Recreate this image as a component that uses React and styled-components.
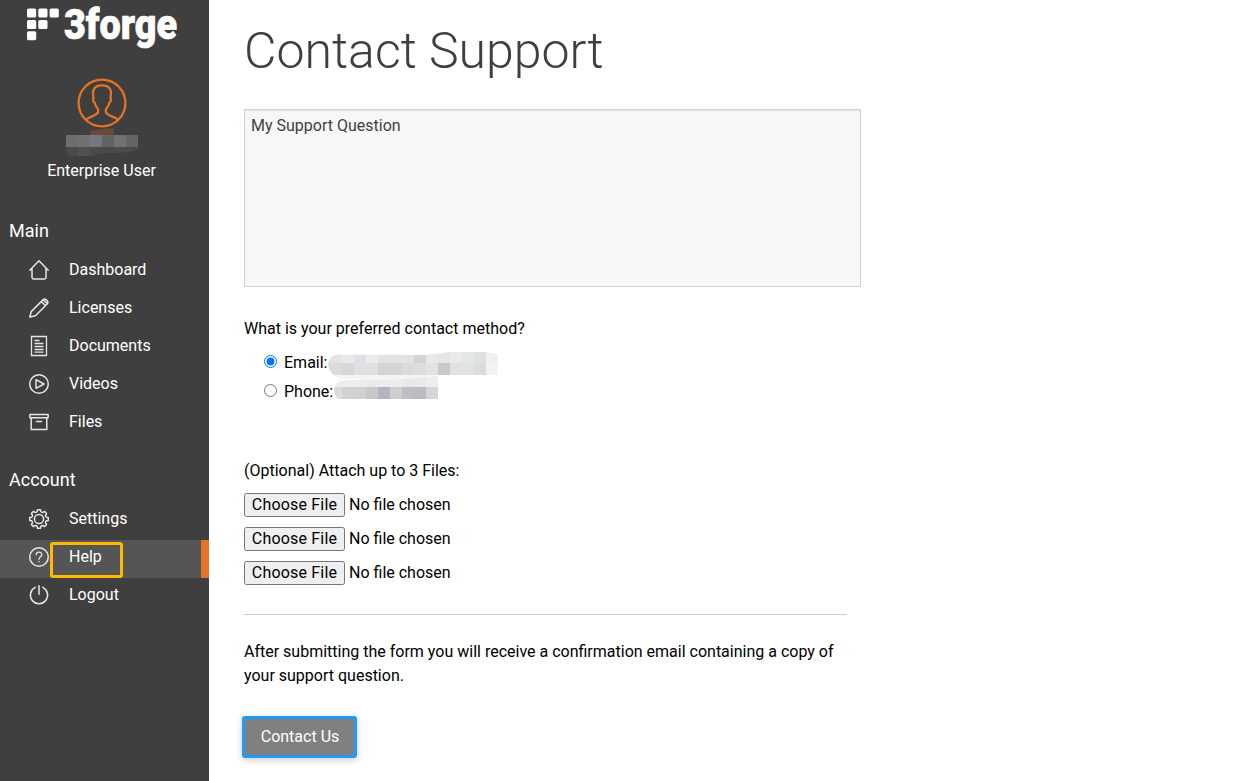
import React from "react";
import styled, { createGlobalStyle } from "styled-components";

const GlobalStyle = createGlobalStyle`
  *, *::before, *::after { box-sizing: border-box; }
  html, body { margin: 0; padding: 0; background: #fff; }
  body { font-family: Roboto, "Liberation Sans", sans-serif; font-size: 16px; line-height: 24px; color: #000; overflow: hidden; }
`;

const Page = styled.div`
  display: flex;
  height: 781px;
  overflow: hidden;
`;

const Sidebar = styled.aside`
  flex: 0 0 209px;
  background: #3f3f3f;
  color: #fff;
`;

const Logo = styled.svg`
  display: block;
  margin-left: 26px;
  overflow: visible;
`;

const LogoText = styled.text`
  font-family: Roboto, "Liberation Sans", sans-serif;
  font-weight: 900;
  font-size: 42px;
  fill: #fff;
  stroke: #fff;
  stroke-width: 0.7px;
  stroke-linejoin: round;
`;

const Profile = styled.div`
  display: flex;
  flex-direction: column;
  align-items: center;
  width: 203px;
  padding-top: 24px;
`;

const Role = styled.div`
  margin-top: 3px;
`;

const GroupTitle = styled.h2`
  margin: ${(p) => p.$top}px 0 10px 9px;
  font-size: 18px;
  line-height: 24px;
  font-weight: 400;
`;

const NavItem = styled.a`
  display: flex;
  height: 38px;
  padding: 0 0 0 28px;
  background: ${(p) => (p.$active ? "#555" : "transparent")};
  border-right: ${(p) => (p.$active ? "8px solid #e57225" : "0")};
  svg { margin-top: 6px; }
`;

const NavLabel = styled.span`
  position: relative;
  margin: 5px 0 0 19px;
`;

const Highlight = styled.span`
  position: absolute;
  left: -19px;
  top: -3px;
  width: 73px;
  height: 36px;
  border: 3px solid #ffb900;
  border-radius: 3px;
`;

const Main = styled.main`
  display: flex;
  flex-direction: column;
  align-items: flex-start;
  padding-left: 35px;
`;

const Title = styled.h1`
  margin: 21px 0 0;
  font-size: 50px;
  line-height: 60px;
  font-weight: 300;
  color: #3f3f3f;
`;

const Question = styled.textarea`
  display: block;
  width: 617px;
  height: 178px;
  margin: 28px 0 0;
  padding: 4px 6px;
  font: inherit;
  color: #3f3f3f;
  background: #f7f7f7;
  border: 1px solid #d2d2d2;
  border-radius: 0;
  box-shadow: inset 0 1px 1px #e2e2e2;
  resize: none;
  outline: none;
`;

const Prompt = styled.p`
  margin: ${(p) => p.$top}px 0 ${(p) => p.$bottom}px;
`;

const Option = styled.label`
  display: flex;
  height: 29px;
  padding-left: 20px;
  white-space: nowrap;
`;

const Radio = styled.input`
  width: 13px;
  height: 13px;
  margin: 4px 7px 0 0;
`;

const Redacted = styled.svg`
  flex: none;
  margin: ${(p) => p.$top}px 0 0 ${(p) => p.$left}px;
`;

const FileInput = styled.input`
  display: block;
  width: 300px;
  height: 24px;
  margin: 0 0 10px;
  font: inherit;
  line-height: 20px;
  &::file-selector-button {
    box-sizing: border-box;
    width: 101px;
    height: 24px;
    padding: 0 0 1px;
    font: inherit;
    line-height: 19px;
    letter-spacing: 0.18px;
  }
`;

const Divider = styled.div`
  width: 603px;
  height: 1px;
  margin-top: 19px;
  background: #ccc;
`;

const Note = styled.p`
  width: 603px;
  margin: 25px 0 28px;
`;

const Submit = styled.button`
  width: 115px;
  height: 42px;
  margin-left: -2px;
  padding: 0 0 1px 1px;
  font: inherit;
  color: #fff;
  background: #808080;
  border: 3px solid #1e9bff;
  border-radius: 3px;
  box-shadow: 0 2px 7px rgba(0, 0, 0, 0.2);
`;

const Glyph = ({ children }) => (
  <svg width="22" height="22" viewBox="0 0 22 22" fill="none" stroke="#e6e6e6" strokeWidth="1.5" strokeLinecap="round" strokeLinejoin="round">
    {children}
  </svg>
);

const gearPoints = () => {
  let d = "";
  for (let i = 0; i < 8; i++) {
    const at = (r, deg) => {
      const a = ((i * 45 + deg) * Math.PI) / 180;
      return `${(11 + r * Math.sin(a)).toFixed(2)} ${(11 - r * Math.cos(a)).toFixed(2)}`;
    };
    d += `${i ? "L" : "M"}${at(9.4, -9)} L${at(9.4, 9)} L${at(7.6, 14)} Q${at(6.9, 22.5)} ${at(7.6, 31)} `;
  }
  return d + "Z";
};

const icons = {
  home: <path d="M1.8 11.2 11 1.8 20.2 11.2M4 9.5V18.6Q4 20 5.4 20H16.6Q18 20 18 18.6V9.5" />,
  pencil: <path d="M1.8 20 3.2 14.6 15.2 2.6Q16.5 1.3 18 2.6L19.4 4Q20.7 5.5 19.4 6.8L7.4 18.8ZM13.3 4.5 17.5 8.7M15.2 2.8 19.2 6.8" />,
  doc: <path d="M3.5 1.5H18.5V20.5H3.5ZM6.5 5.500H11.500M6.500 8.500H15.500M6.500 11.500H15.500M6.500 14.500H15.500M6.500 17.200H15.500" strokeWidth="1.3" strokeLinecap="butt" strokeLinejoin="miter" />,
  play: <><circle cx="11" cy="11" r="9.3" /><path d="M8 6.7V15.3L16 11Z" /></>,
  box: <path d="M1.9 3.500H20.100V6.800H1.900ZM3.200 6.800V18.400H18.800V6.800M8.500 10.500H13.500" />,
  gear: <><path d={gearPoints()} /><circle cx="11" cy="11" r="4.6" /></>,
  help: <><circle cx="11" cy="11" r="9.3" /><path d="M8.2 8.7C8.2 5.2 13.8 5.2 13.8 8.5C13.8 10.8 11 10.6 11 13.3M11 15.4V15.8" strokeWidth="1.3" /></>,
  power: <path d="M11 1.7V10.3M7.2 3.400A8.600 8.600 0 1 0 14.800 3.400" />,
};

const Item = ({ icon, active, marked, children }) => (
  <NavItem $active={active}>
    <Glyph>{icons[icon]}</Glyph>
    <NavLabel>{children}{marked && <Highlight />}</NavLabel>
  </NavItem>
);

const Cells = ({ colors, x, y, h, first = 12, size = 12 }) =>
  colors.map((c, i) => (
    <rect key={i} x={i ? x + first + (i - 1) * size : x} y={y} width={i ? size : first} height={h} fill={c} shapeRendering="crispEdges" />
  ));

export default function App() {
  return (
    <>
      <GlobalStyle />
      <Page>
        <Sidebar>
          <Logo width="155" height="54" viewBox="26 0 155 54">
            {[[27, 8.5], [38.3, 8.5], [49.6, 8.5], [27, 20], [38.3, 20], [27, 31.2]].map(([x, y]) => (
              <rect key={`${x}-${y}`} x={x} y={y} width="9.2" height="9" rx="1.6" fill="#fff" />
            ))}
            <LogoText x="64" y="39.3" textLength="113" lengthAdjust="spacingAndGlyphs">3forge</LogoText>
          </Logo>
          <Profile>
            <svg width="74" height="78" viewBox="65 78 74 78">
              <g fill="none" stroke="#e57225" strokeWidth="2.3" strokeLinejoin="round">
                <circle cx="102" cy="103" r="23.4" />
                <path d="M86 119.500C91 115.500 98.500 116 98.300 110.500C98.200 107.500 95.500 107.500 94.800 102.800C93 102 92.600 99.500 93.600 98.200C91.500 89 95 85.300 102 85.300C109 85.300 112.500 89 110.400 98.200C111.400 99.500 111 102 109.200 102.800C108.500 107.500 105.800 107.500 105.700 110.500C105.500 116 113 115.500 118 119.500" />
              </g>
              <path d="M90 131 102 129 114 128V135H90Z" fill="#664a37" />
              <Cells x={66} y={135} h={12} colors={["#6e6e6e", "#717171", "#77767c", "#636363", "#727273", "#656463"]} />
              <path d="M66 147H138V149Q132 153 114 153Q98 153 92 156H68Q66 153 66 147Z" fill="#4a4a4a" />
              <rect x="78" y="147" width="12" height="9" fill="#505251" />
            </svg>
            <Role>Enterprise User</Role>
          </Profile>
          <GroupTitle $top={36}>Main</GroupTitle>
          <Item icon="home">Dashboard</Item>
          <Item icon="pencil">Licenses</Item>
          <Item icon="doc">Documents</Item>
          <Item icon="play">Videos</Item>
          <Item icon="box">Files</Item>
          <GroupTitle $top={25}>Account</GroupTitle>
          <Item icon="gear">Settings</Item>
          <Item icon="help" active marked>Help</Item>
          <Item icon="power">Logout</Item>
        </Sidebar>
        <Main>
          <Title>Contact Support</Title>
          <Question defaultValue="My Support Question" spellCheck={false} />
          <Prompt $top={30} $bottom={10}>What is your preferred contact method?</Prompt>
          <Option>
            <Radio type="radio" name="method" defaultChecked />Email:
            <Redacted $top={0} $left={0} width="171" height="28" viewBox="327 351 171 28">
              <clipPath id="mail"><path d="M328 364Q329 355 338 354.500L425 355 450 352H486L498 354V375H442L400 380H345Q329 377 328 364Z" /></clipPath>
              <g clipPath="url(#mail)">
                <Cells x={327} y={351} h={12} first={15} colors={["#e5e4e4", "#e9eae7", "#e0dfe6", "#ececec", "#e3e3e3", "#e3e3e3", "#e2e2e3", "#d5d4d4", "#e9e9e9", "#e6e6e6", "#e9ebeb", "#e4e6e6", "#dde1e0", "#f0f0f0"]} />
                <Cells x={327} y={363} h={12} first={15} colors={["#dcdada", "#d8d7d5", "#dfdfe5", "#e0e0e0", "#d4d4d4", "#d4d4d3", "#dbdbdb", "#dededd", "#e2e2e5", "#cbcac9", "#e1e1e2", "#e2e3e4", "#d9dddc", "#f2f2f2"]} />
                <rect x="327" y="375" width="115" height="4" fill="#f4f4f4" />
              </g>
            </Redacted>
          </Option>
          <Option>
            <Radio type="radio" name="method" />Phone:
            <Redacted $top={-4} $left={0} width="105" height="24" viewBox="333 376 105 24">
              <clipPath id="tel"><path d="M334 390Q335 380 345 380L405 379 438 376V399H338Q334 396 334 390Z" /></clipPath>
              <g clipPath="url(#tel)">
                <Cells x={330} y={375} h={12} colors={["#ededed", "#eeeeee", "#ededed", "#eaeaea", "#ececec", "#ededed", "#e9e9e9", "#eaeaea", "#eeeeee"]} />
                <Cells x={330} y={387} h={12} colors={["#dddcdc", "#d3d1d2", "#d2d1d2", "#c8c7c9", "#b5b5c2", "#cfced3", "#c1bec4", "#bfbcc1", "#d5d5d7"]} />
              </g>
            </Redacted>
          </Option>
          <Prompt $top={50} $bottom={10}>(Optional) Attach up to 3 Files:</Prompt>
          <FileInput type="file" />
          <FileInput type="file" />
          <FileInput type="file" />
          <Divider />
          <Note>After submitting the form you will receive a confirmation email containing a copy of your support question.</Note>
          <Submit>Contact Us</Submit>
        </Main>
      </Page>
    </>
  );
}
